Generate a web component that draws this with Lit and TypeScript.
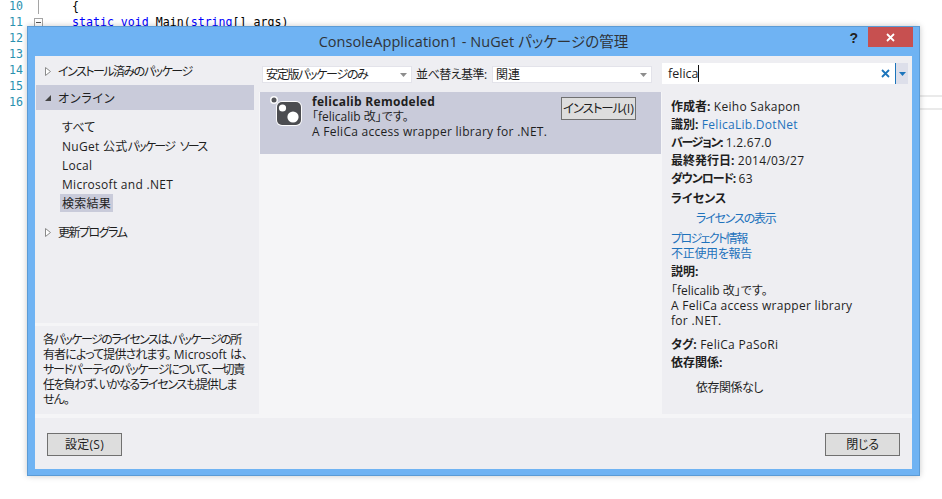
import { LitElement, html, css, svg } from "lit";
import { customElement } from "lit/decorators.js";

const nuget = svg`<svg class="pkg" width="34" height="34" viewBox="0 0 34 34">
  <rect x="6" y="7" width="26" height="25" rx="6" fill="#fff" opacity=".92"/>
  <circle cx="4" cy="6" r="4" fill="#fff" opacity=".92"/>
  <circle cx="4" cy="6" r="2.500" fill="#55565a"/>
  <rect x="7" y="8" width="24" height="23" rx="5" fill="#4b4c50"/>
  <circle cx="12.500" cy="14" r="3.600" fill="#fff"/>
  <circle cx="23" cy="23" r="5.600" fill="#fff"/>
</svg>`;

const arrowOpen = svg`<svg class="tw" width="8" height="9" viewBox="0 0 8 9"><path d="M1.500.5v8l5-4z" fill="#fff" stroke="#8a8a8a"/></svg>`;
const arrowDown = svg`<svg class="tw" width="8" height="9" viewBox="0 0 8 9"><path d="M7 2v6H1z" fill="#444"/></svg>`;
const ddArrow = svg`<svg width="7" height="4" viewBox="0 0 7 4"><path d="M0 0h7L3.500 4z" fill="#8d8d8d"/></svg>`;

@customElement("app-root")
export class AppRoot extends LitElement {
  static styles = css`
    :host { display: block; width: 942px; height: 499px; }
    * { box-sizing: border-box; }
    .stage { position: relative; width: 942px; height: 499px; overflow: hidden; background: #fff; }

    .editor { margin-top: -2px; font: 11.600px/16px "DejaVu Sans Mono", monospace; }
    .ln { display: flex; height: 16px; white-space: pre; }
    .num { width: 23px; text-align: right; color: #2b91af; flex: none; }
    .gut { width: 49px; flex: none; position: relative; }
    .gut .rule { position: absolute; left: 15px; top: 0; bottom: 0; width: 1px; background: #a5a5a5; }
    .gut .box { position: absolute; left: 11px; top: 4px; width: 9px; height: 9px; border: 1px solid #a5a5a5; background: #fff; }
    .gut .box::after { content: ""; position: absolute; left: 1px; top: 3px; width: 5px; height: 1px; background: #555; }
    .kw { color: #00f; }
    .hl { position: absolute; left: 920px; right: 0; top: 95px; height: 15px; border: solid #eaeaea; border-width: 2px 0; }

    .win {
      position: absolute; left: 27px; top: 26px; width: 893px; height: 449.500px;
      background: #6fb3f3; border: 1px solid #5b9bd5;
      box-shadow: 0 0 6px rgba(0,0,0,.22);
      display: flex; flex-direction: column;
      padding: 0 7px 6px 7px;
      font: 12px/15px "Open Sans", "Noto Sans CJK JP", sans-serif;
      font-feature-settings: "palt";
      letter-spacing: .28px;
      color: #1e1e1e;
    }
    .title { height: 29px; flex: none; position: relative; display: flex; justify-content: center; align-items: center; font-size: 14.500px; letter-spacing: .06px; color: #2f3338; }
    .help { position: absolute; right: 54px; top: 1px; font: bold 14px/20px "Liberation Sans", sans-serif; color: #222; }
    .close { position: absolute; right: -1px; top: 0; width: 45px; height: 20px; background: #c75050; display: flex; align-items: center; justify-content: center; }

    .sp0 { letter-spacing: 0; }
    .sp-a { letter-spacing: -.5px; }
    .sp-b { letter-spacing: -1.100px; }
    .sp-c { letter-spacing: -1.300px; }
    .sp-d { letter-spacing: -1.500px; }
    .sp-e { letter-spacing: -.3px; }
    .sp-f { letter-spacing: -1.600px; }
    .sp-g { letter-spacing: .8px; }
    .sp-h { letter-spacing: -1.200px; }
    .sp-j { letter-spacing: -.9px; }
    .sp-w { letter-spacing: -1.700px; word-spacing: 4px; }

    .body { flex: 1; background: #eeeef2; display: flex; flex-direction: column; min-height: 0; }
    .main { flex: 1; display: flex; min-height: 0; }
    .left { width: 224px; flex: none; display: flex; flex-direction: column; padding: 6px 5px 0 1px; }
    .row { display: flex; align-items: center; gap: 6px; height: 18px; padding-left: 8px; }
    .row.sel { background: #c9cbda; height: 25px; margin-top: 5px; padding-top: 1px; }
    .row.sel .tw { margin-top: -1px; }
    .sub { padding: 8px 0 0 26px; display: flex; flex-direction: column; }
    .sub div { height: 19px; line-height: 19px; }
    .sub .on { background: #c9cbda; align-self: flex-start; padding: 0 2px; margin-left: -2px; height: 18px; line-height: 20px; }
    .tree { flex: 1; }
    .row.upd { margin-top: 11px; }
    .notice { flex: none; height: 91px; margin-right: -4px; margin-left: -1px; border-top: 3px solid #f5f5f7; padding: 6px 0 0 8px; line-height: 15px; white-space: nowrap; }

    .center { width: 403px; flex: none; background: #f5f5f7; display: flex; flex-direction: column; }
    .filters { height: 36px; flex: none; background: #eeeef2; display: flex; align-items: center; padding: 0 10px 0 3px; }
    .dd { height: 17px; background: #fff; border: 1px solid #e3e3ea; display: flex; align-items: center; justify-content: space-between; padding: 0 4px 0 3px; margin-top: 1px; flex: none; }
    .dd.a { width: 150px; }
    .dd.b { width: 160px; }
    .lbl { margin-left: 4px; width: 76px; white-space: nowrap; flex: none; }
    .item { margin-left: 1px; margin-right: 1px; height: 62px; background: #c9cbda; display: flex; }
    .pkg { margin: 2px 8px 0 10px; flex: none; }
    .info { flex: 1; padding-top: 2px; }
    .info b { display: block; font-weight: 700; }
    .install { width: 75px; height: 23px; margin: 5px 25px 0 0; border: 1px solid #707070; background: #dddddd; display: flex; align-items: center; justify-content: center; flex: none; font-size: 12.500px; white-space: nowrap; }

    .right { flex: 1; display: flex; flex-direction: column; min-width: 0; }
    .search { height: 21px; margin-top: 7px; margin-right: 4px; background: #fff; display: flex; align-items: center; padding-left: 6px; flex: none; }
    .search .t { flex: 1; display: flex; align-items: center; font-size: 12.500px; letter-spacing: 0; }
    .caret { width: 1px; height: 17px; background: #111; }
    .search .x { margin-right: 5px; display: flex; }
    .search .drop { width: 13px; height: 21px; border-left: 1px solid #1c75bc; background: #dddfea; display: flex; align-items: center; justify-content: center; }
    .details { padding: 14px 0 0 9px; line-height: 18px; }
    .details > div { min-height: 18px; }
    .details b { font-weight: 700; }
    a { color: #1e72bc; text-decoration: none; }
    .lic { margin-top: 2px; }
    .ind { padding-left: 25px; }
    .tight { line-height: 15px; margin-top: 3px; margin-bottom: 2px; }
    .desc { line-height: 15px; margin-top: 2px; width: 190px; }
    .tags { margin-top: 8px; }
    .deps { margin-top: 7px; }
    .foot { height: 55px; flex: none; border-top: 4px solid #f5f5f7; display: flex; justify-content: space-between; padding: 15px 12px 0 12px; }
    .btn { width: 75px; height: 23px; border: 1px solid #707070; background: #dddddd; display: flex; align-items: center; justify-content: center; }
  `;

  render() {
    return html`<div class="stage">
      <div class="editor">
        <div class="ln"><span class="num">10</span><span class="gut"><i class="rule"></i></span>{</div>
        <div class="ln"><span class="num">11</span><span class="gut"><i class="box"></i></span>    <span class="kw">static void</span> Main(<span class="kw">string</span>[] args)</div>
        <div class="ln"><span class="num">12</span></div>
        <div class="ln"><span class="num">13</span></div>
        <div class="ln"><span class="num">14</span></div>
        <div class="ln"><span class="num">15</span></div>
        <div class="ln"><span class="num">16</span></div>
      </div>
      <div class="hl"></div>

      <div class="win">
        <div class="title">ConsoleApplication1 - NuGet パッケージの管理
          <span class="help">?</span>
          <span class="close"><svg width="9" height="9" viewBox="0 0 9 9"><path d="M1 1l7 7M8 1L1 8" stroke="#fff" stroke-width="1.800"/></svg></span>
        </div>
        <div class="body">
          <div class="main">
            <div class="left">
              <div class="tree">
                <div class="row">${arrowOpen}<span class="sp-d">インストール済みのパッケージ</span></div>
                <div class="row sel">${arrowDown}<span class="sp-g">オンライン</span></div>
                <div class="sub">
                  <div>すべて</div>
                  <div>NuGet 公式<span class="sp-w">パッケージ ソース</span></div>
                  <div>Local</div>
                  <div>Microsoft and .NET</div>
                  <div class="on">検索結果</div>
                </div>
                <div class="row upd">${arrowOpen}<span class="sp-d">更新プログラム</span></div>
              </div>
              <div class="notice">
                <span class="sp-d">各パッケージのライセンスは、パッケージの所</span><br />
                <span class="sp-j">有者によって提供されます。</span> <span class="sp0">Microsoft は、</span><br />
                <span class="sp-c">サードパーティのパッケージについて、一切責</span><br />
                <span class="sp-c">任を負わず、いかなるライセンスも提供しま</span><br />
                <span class="sp-j">せん。</span>
              </div>
            </div>
            <div class="center">
              <div class="filters">
                <div class="dd a"><span class="sp-c">安定版パッケージのみ</span>${ddArrow}</div>
                <span class="lbl"><span class="sp-a">並べ替え基準:</span></span>
                <div class="dd b"><span class="sp0">関連</span>${ddArrow}</div>
              </div>
              <div class="item">
                ${nuget}
                <div class="info">
                  <b>felicalib Remodeled</b>
                  <div class="sp0">「felicalib 改」です。</div>
                  <div>A FeliCa access wrapper library for .NET.</div>
                </div>
                <div class="install"><span class="sp-b">インストール</span><span class="sp0">(I)</span></div>
              </div>
            </div>
            <div class="right">
              <div class="search">
                <div class="t">felica<i class="caret"></i></div>
                <span class="x"><svg width="9" height="9" viewBox="0 0 9 9"><path d="M1 1l7 7M8 1L1 8" stroke="#1c75bc" stroke-width="1.800"/></svg></span>
                <span class="drop"><svg width="7" height="4" viewBox="0 0 7 4"><path d="M0 0h7L3.500 4z" fill="#1c75bc"/></svg></span>
              </div>
              <div class="details">
                <div><b class="sp0">作成者:</b> Keiho Sakapon</div>
                <div><b class="sp0">識別:</b> <a>FelicaLib.DotNet</a></div>
                <div><b class="sp-c">バージョン:</b> 1.2.67.0</div>
                <div><b class="sp0">最終発行日:</b> 2014/03/27</div>
                <div><b class="sp-b">ダウンロード:</b> 63</div>
                <div class="lic"><b class="sp0">ライセンス</b></div>
                <div class="ind lic"><a class="sp-h">ライセンスの表示</a></div>
                <div class="tight"><a class="sp-f">プロジェクト情報</a><br /><a class="sp-e">不正使用を報告</a></div>
                <div><b class="sp0">説明:</b></div>
                <div class="desc"><span class="sp0">「felicalib 改」です。</span><br />A FeliCa access wrapper library for .NET.</div>
                <div class="tags"><b class="sp0">タグ:</b> FeliCa PaSoRi</div>
                <div><b class="sp0">依存関係:</b></div>
                <div class="ind deps"><span class="sp-a">依存関係なし</span></div>
              </div>
            </div>
          </div>
          <div class="foot">
            <div class="btn">設定(S)</div>
            <div class="btn"><span class="sp-e">閉じる</span></div>
          </div>
        </div>
      </div>
    </div>`;
  }
}
